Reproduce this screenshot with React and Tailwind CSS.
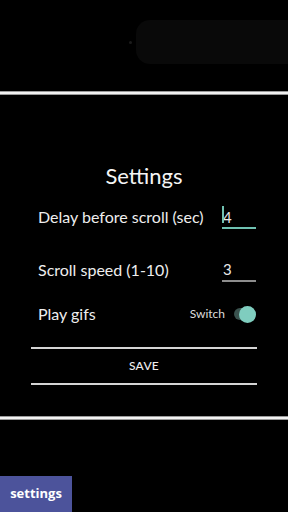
import React, { useState } from "react";

export default function App() {
  const [delay, setDelay] = useState("4");
  const [speed, setSpeed] = useState("3");
  const [gifs, setGifs] = useState(true);

  return (
    <div className="w-[288px] h-[512px] bg-black flex flex-col overflow-hidden" style={{ fontFamily: "Lato, 'Open Sans', sans-serif" }}>
      <div className="h-[91px] relative">
        <div className="absolute left-[136px] top-[20px] w-[152px] h-[44px] rounded-l-[14px] bg-[#090909]" />
        <div className="absolute left-[129px] top-[41px] w-[3px] h-[3px] rounded-full bg-[#1c1c1c]" />
      </div>
      <div className="h-[4px] bg-[#f2f2f2] border-y border-[#9a9a9a]" />

      <div className="h-[321px] flex justify-center">
        <div className="w-[226px] pt-[68px] flex flex-col text-white">
          <h2 className="text-[22px] leading-[26px] text-center text-[#f5f5f5]">Settings</h2>

          <div className="mt-[16px] h-[24px] flex items-center justify-between pl-[7px] pr-[1px]">
            <span className="text-[16px] text-[#eeeeee]">Delay before scroll (sec)</span>
            <div className="relative w-[34px] h-[24px] border-b-2 border-[#6fc1b1]">
              <div className="absolute left-0 top-[1px] w-[2px] h-[17px] bg-[#6fc1b1]" />
              <input
                value={delay}
                onChange={(e) => setDelay(e.target.value)}
                className="w-full h-full bg-transparent outline-none text-[15px] text-[#e8e8e8] pl-[1px] caret-transparent"
              />
            </div>
          </div>

          <div className="mt-[28px] h-[25px] flex items-center justify-between pl-[7px] pr-[1px]">
            <span className="text-[16px] text-[#eeeeee]">Scroll speed (1-10)</span>
            <div className="w-[34px] h-[25px] border-b-2 border-[#8d8d8d]">
              <input
                value={speed}
                onChange={(e) => setSpeed(e.target.value)}
                className="w-full h-full bg-transparent outline-none text-[15px] text-[#e8e8e8] pl-[1px]"
              />
            </div>
          </div>

          <div className="mt-[20px] h-[24px] flex items-center justify-between pl-[7px] pr-[3px]">
            <span className="text-[16px] text-[#eeeeee]">Play gifs</span>
            <div className="flex items-center gap-[9px]">
              <span className="text-[12px] text-[#dddddd]">Switch</span>
              <button onClick={() => setGifs(!gifs)} className="relative w-[20px] h-[12px] rounded-full bg-[#3a524e]">
                <span className={gifs ? "absolute -right-[2px] -top-[2.5px] w-[17px] h-[17px] rounded-full bg-[#7fcdbf]" : "absolute -left-[2px] -top-[2.5px] w-[17px] h-[17px] rounded-full bg-[#cccccc]"} />
              </button>
            </div>
          </div>

          <button className="mt-[21px] h-[38px] border-y-2 border-[#d4d4d4] text-[12px] font-medium text-[#eeeeee] tracking-wide">
            SAVE
          </button>
        </div>
      </div>

      <div className="h-[4px] bg-[#f2f2f2] border-y border-[#9a9a9a]" />

      <div className="flex-1 flex items-end">
        <button className="w-[72px] h-[36px] bg-[#4c539b] text-white font-bold text-[13px]" style={{ fontFamily: "'Open Sans', sans-serif" }}>
          settings
        </button>
      </div>
    </div>
  );
}
